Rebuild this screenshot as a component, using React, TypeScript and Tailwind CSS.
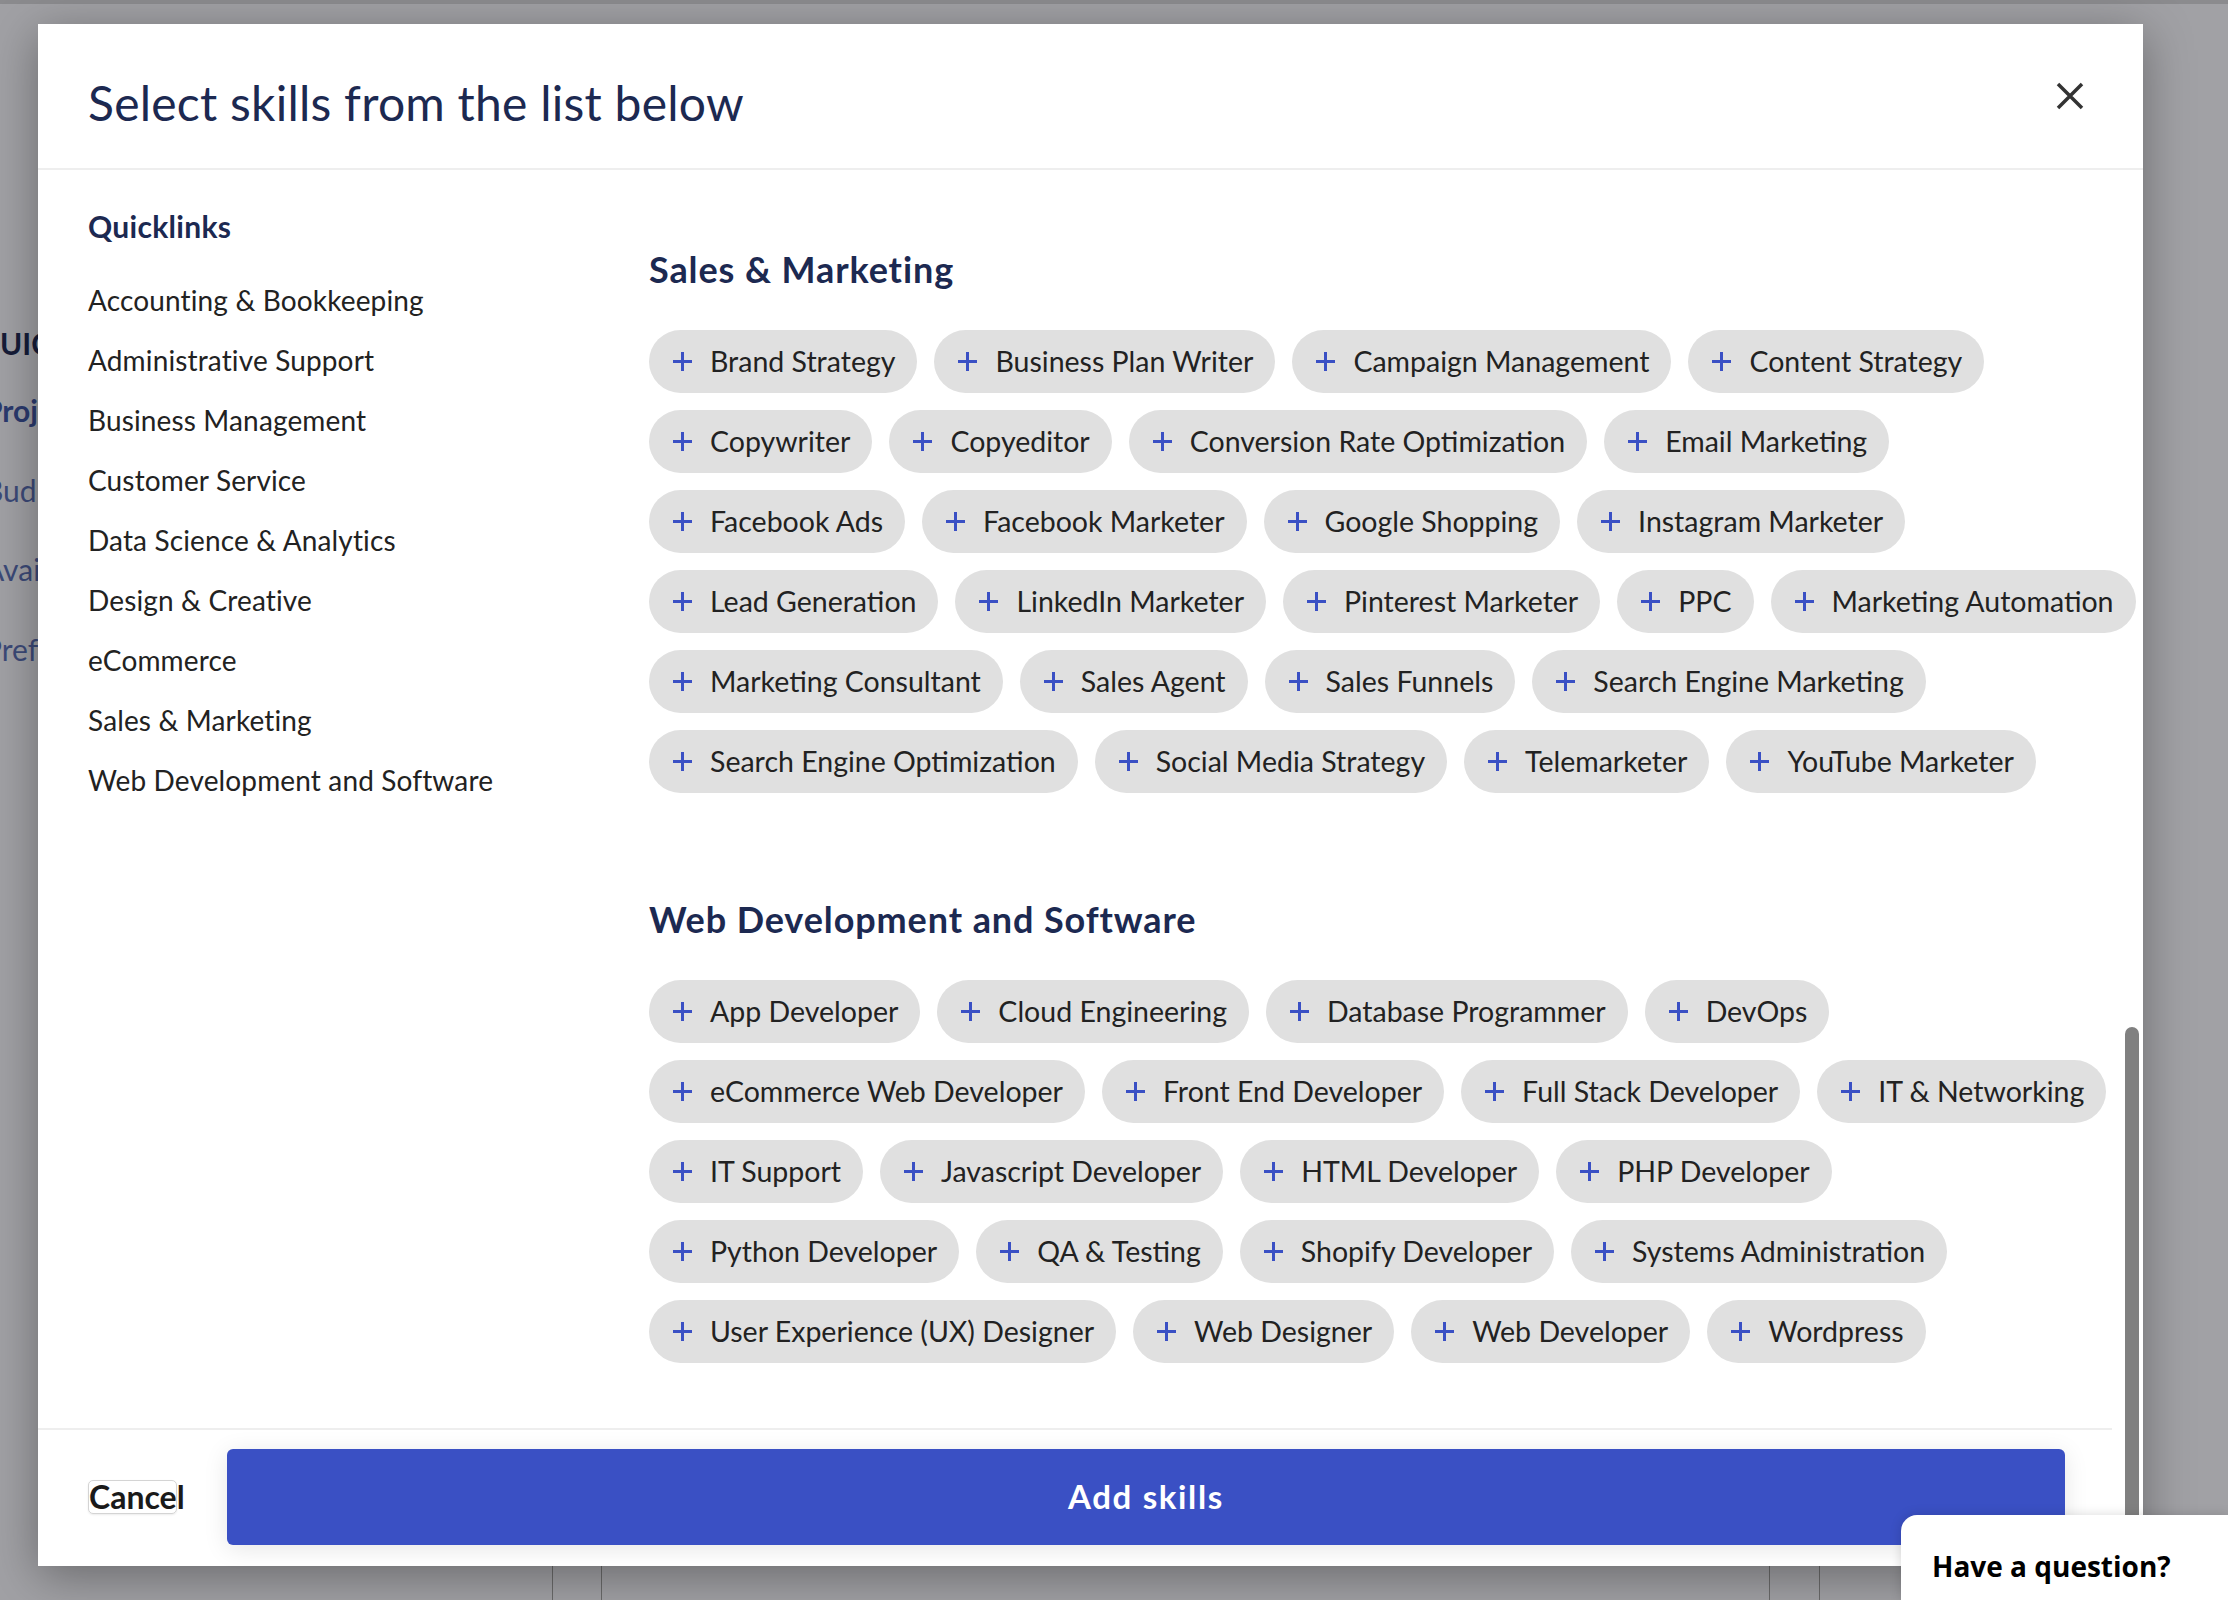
const quicklinks = [
  "Accounting & Bookkeeping",
  "Administrative Support",
  "Business Management",
  "Customer Service",
  "Data Science & Analytics",
  "Design & Creative",
  "eCommerce",
  "Sales & Marketing",
  "Web Development and Software",
];

const sections = [
  {
    title: "Sales & Marketing",
    rows: [
      ["Brand Strategy", "Business Plan Writer", "Campaign Management", "Content Strategy"],
      ["Copywriter", "Copyeditor", "Conversion Rate Optimization", "Email Marketing"],
      ["Facebook Ads", "Facebook Marketer", "Google Shopping", "Instagram Marketer"],
      ["Lead Generation", "LinkedIn Marketer", "Pinterest Marketer", "PPC", "Marketing Automation"],
      ["Marketing Consultant", "Sales Agent", "Sales Funnels", "Search Engine Marketing"],
      ["Search Engine Optimization", "Social Media Strategy", "Telemarketer", "YouTube Marketer"],
    ],
  },
  {
    title: "Web Development and Software",
    rows: [
      ["App Developer", "Cloud Engineering", "Database Programmer", "DevOps"],
      ["eCommerce Web Developer", "Front End Developer", "Full Stack Developer", "IT & Networking"],
      ["IT Support", "Javascript Developer", "HTML Developer", "PHP Developer"],
      ["Python Developer", "QA & Testing", "Shopify Developer", "Systems Administration"],
      ["User Experience (UX) Designer", "Web Designer", "Web Developer", "Wordpress"],
    ],
  },
];

function Plus() {
  return (
    <svg width="21" height="21" viewBox="0 0 21 21" className="shrink-0">
      <path d="M10.5 1v19M1 10.5h19" stroke="#3a50c4" strokeWidth="3" />
    </svg>
  );
}

function Chip({ label }: { label: string }) {
  return (
    <button className="flex h-[63px] shrink-0 items-center gap-[17px] whitespace-nowrap rounded-full bg-[#e0e0e0] pl-[23px] pr-[22px] text-[28.5px] text-[#222222]">
      <Plus />
      {label}
    </button>
  );
}

export default function App() {
  return (
    <div className="relative h-[1600px] w-[2228px] overflow-hidden bg-[#a1a1a5] font-['Lato',sans-serif]">
      {/* page behind the overlay */}
      <div className="h-[4px] bg-[#8b8b8e]" />
      <div className="flex w-[38px] flex-col overflow-hidden pt-[318px] text-[30px] leading-[42px]">
        <p className="font-bold text-[#161c38]">UIC</p>
        <p className="ml-[-16px] mt-[25px] font-bold text-[#2b3a6e]">Proj</p>
        <p className="ml-[-16px] mt-[38px] text-[#3c4a78]">Bud</p>
        <p className="ml-[-16px] mt-[37px] text-[#3c4a78]">Avai</p>
        <p className="ml-[-16px] mt-[38px] text-[#3c4a78]">Pref</p>
      </div>
      <div className="mt-[790px] flex h-[200px]">
        <div className="ml-[552px] w-[50px] border-x border-[#6a6a6a]" />
        <div className="ml-[1167px] w-[51px] border-x border-[#6a6a6a]" />
      </div>

      {/* modal */}
      <div className="absolute left-[38px] top-[24px] flex h-[1542px] w-[2105px] flex-col bg-white shadow-[0_10px_45px_rgba(0,0,0,0.35)]">
        <header className="flex h-[146px] shrink-0 items-center justify-between border-b-2 border-[#eeeeee] pl-[50px] pr-[59px]">
          <h1 className="pt-[14px] text-[48px] tracking-[0.005em] text-[#1c2951]">Select skills from the list below</h1>
          <svg width="28" height="28" viewBox="0 0 28 28">
            <path d="M2 2l24 24M26 2L2 26" stroke="#333333" strokeWidth="3.5" />
          </svg>
        </header>

        <div className="flex flex-1 overflow-hidden">
          <aside className="w-[611px] shrink-0 pl-[50px] pt-[36px]">
            <p className="text-[30px] font-bold leading-[40px] tracking-[0.01em] text-[#1c2951]">Quicklinks</p>
            <ul className="mt-[24px]">
              {quicklinks.map((item) => (
                <li key={item} className="text-[28px] leading-[60px] tracking-[0.005em] text-[#222222]">
                  {item}
                </li>
              ))}
            </ul>
          </aside>
          <section className="flex-1 pt-[77px]">
            {sections.map((section, i) => (
              <div key={section.title} className={i > 0 ? "mt-[104px]" : ""}>
                <h2 className="mb-[39px] text-[36px] font-bold leading-[44px] tracking-[0.025em] text-[#1c2951]">
                  {section.title}
                </h2>
                <div className="flex flex-col gap-[17px]">
                  {section.rows.map((row, r) => (
                    <div key={r} className="flex gap-[17px]">
                      {row.map((label) => (
                        <Chip key={label} label={label} />
                      ))}
                    </div>
                  ))}
                </div>
              </div>
            ))}
          </section>
        </div>

        <footer className="mr-[31px] flex h-[138px] shrink-0 items-center border-t-2 border-[#eeeeee] pb-[2px] pl-[50px]">
          <span className="inline-block h-[34px] w-[89px] overflow-visible whitespace-nowrap rounded-[5px] border border-[#d4d4d4] text-[32px] font-bold leading-[32px] text-[#1a1a1a] shadow-[0_1px_2px_rgba(0,0,0,0.08)]">
            Cancel
          </span>
          <button className="ml-[50px] h-[96px] w-[1838px] rounded-[6px] bg-[#3a50c4] text-[33px] font-bold tracking-[0.05em] text-white shadow-[0_4px_24px_rgba(0,0,0,0.1)]">
            Add skills
          </button>
        </footer>

        {/* scrollbar thumb */}
        <div className="absolute right-[4px] top-[1003px] h-[530px] w-[14px] rounded-full bg-[#808080]" />
      </div>

      {/* help widget */}
      <div className="absolute bottom-0 right-0 flex h-[85px] w-[327px] items-start rounded-tl-[16px] bg-white pl-[31px] pt-[31px] font-['Open_Sans',sans-serif] text-[28px] font-bold leading-[40px] text-black shadow-[0_0_12px_rgba(0,0,0,0.15)]">
        Have a question?
      </div>
    </div>
  );
}
